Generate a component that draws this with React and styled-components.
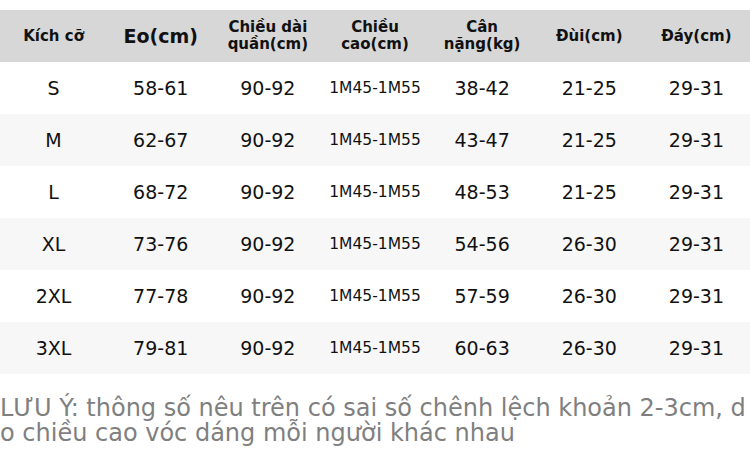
import React from "react";
import styled, { createGlobalStyle } from "styled-components";

const GlobalStyle = createGlobalStyle`
  html, body {
    margin: 0;
    padding: 0;
    background: #ffffff;
    font-family: "DejaVu Sans", "Noto Sans", sans-serif;
  }
`;

const Page = styled.div`
  width: 750px;
  padding-top: 10px;
`;

const Table = styled.table`
  width: 750px;
  border-collapse: collapse;
  table-layout: fixed;
`;

const HeadRow = styled.tr`
  background: #d7d7d7;
  height: 52px;
`;

const HeadCell = styled.th`
  padding: 0;
  font-size: ${({ big }) => (big ? "19px" : "15px")};
  font-weight: bold;
  line-height: 17px;
  color: #111;
  text-align: center;
  vertical-align: middle;
`;

const Row = styled.tr`
  height: 52px;
  background: ${({ striped }) => (striped ? "#f7f7f7" : "#ffffff")};
`;

const Cell = styled.td`
  padding: 0;
  font-size: ${({ small }) => (small ? "15.5px" : "19px")};
  color: #111;
  text-align: center;
  vertical-align: middle;
`;

const Note = styled.p`
  margin: 22px 0 0;
  font-size: 24px;
  line-height: 25px;
  color: #7f7f7f;
  word-break: break-all;
`;

const headers = [
  { label: "Kích cỡ" },
  { label: "Eo(cm)", big: true },
  { label: ["Chiều dài", "quần(cm)"] },
  { label: ["Chiều", "cao(cm)"] },
  { label: ["Cân", "nặng(kg)"] },
  { label: "Đùi(cm)" },
  { label: "Đáy(cm)" },
];

const rows = [
  ["S", "58-61", "90-92", "1M45-1M55", "38-42", "21-25", "29-31"],
  ["M", "62-67", "90-92", "1M45-1M55", "43-47", "21-25", "29-31"],
  ["L", "68-72", "90-92", "1M45-1M55", "48-53", "21-25", "29-31"],
  ["XL", "73-76", "90-92", "1M45-1M55", "54-56", "26-30", "29-31"],
  ["2XL", "77-78", "90-92", "1M45-1M55", "57-59", "26-30", "29-31"],
  ["3XL", "79-81", "90-92", "1M45-1M55", "60-63", "26-30", "29-31"],
];

export default function App() {
  return (
    <Page>
      <GlobalStyle />
      <Table>
        <thead>
          <HeadRow>
            {headers.map((h, i) => (
              <HeadCell key={i} big={h.big}>
                {Array.isArray(h.label) ? (
                  <>
                    {h.label[0]}
                    <br />
                    {h.label[1]}
                  </>
                ) : (
                  h.label
                )}
              </HeadCell>
            ))}
          </HeadRow>
        </thead>
        <tbody>
          {rows.map((r, i) => (
            <Row key={r[0]} striped={i % 2 === 1}>
              {r.map((v, j) => (
                <Cell key={j} small={j === 3}>
                  {v}
                </Cell>
              ))}
            </Row>
          ))}
        </tbody>
      </Table>
      <Note>
        LƯU Ý: thông số nêu trên có sai số chênh lệch khoản 2-3cm, do chiều cao vóc dáng mỗi người khác nhau
      </Note>
    </Page>
  );
}
